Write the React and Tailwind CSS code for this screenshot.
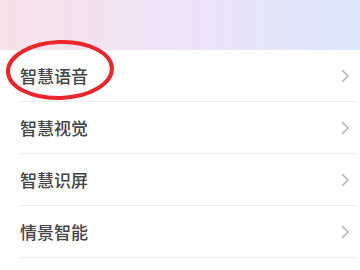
const items = ['智慧语音', '智慧视觉', '智慧识屏', '情景智能'];

const Chevron = () => (
    <svg width="9" height="14" viewBox="0 0 9 14" fill="none">
        <path d="M1.5 1.5 L7 7 L1.5 12.5" stroke="#b5b5b5" strokeWidth="1.6" strokeLinecap="round" strokeLinejoin="round" />
    </svg>
);

const App = () => {
    return (
        <div className="relative w-[360px] h-[270px] overflow-hidden bg-white" style={{ fontFamily: '"Noto Sans CJK SC", "Noto Sans", sans-serif' }}>
            <div className="h-[50px] bg-gradient-to-r from-[#f6e2e8] via-[#efe3f8] to-[#dde9fc]" />
            <div className="pl-[20px] pr-[4px]">
                {items.map((label) => (
                    <div key={label} className="flex items-center justify-between h-[52px] border-b border-[#ececec]">
                        <span className="text-[17px] leading-none font-medium text-[#444444]">{label}</span>
                        <span className="pr-[6px] flex items-center"><Chevron /></span>
                    </div>
                ))}
            </div>
            <svg className="absolute left-0 top-0" width="360" height="270" viewBox="0 0 360 270" fill="none">
                <ellipse cx="60" cy="70" rx="52" ry="28" stroke="#e8262b" strokeWidth="4" transform="rotate(-2 60 70)" />
            </svg>
        </div>
    );
};

export default App;
